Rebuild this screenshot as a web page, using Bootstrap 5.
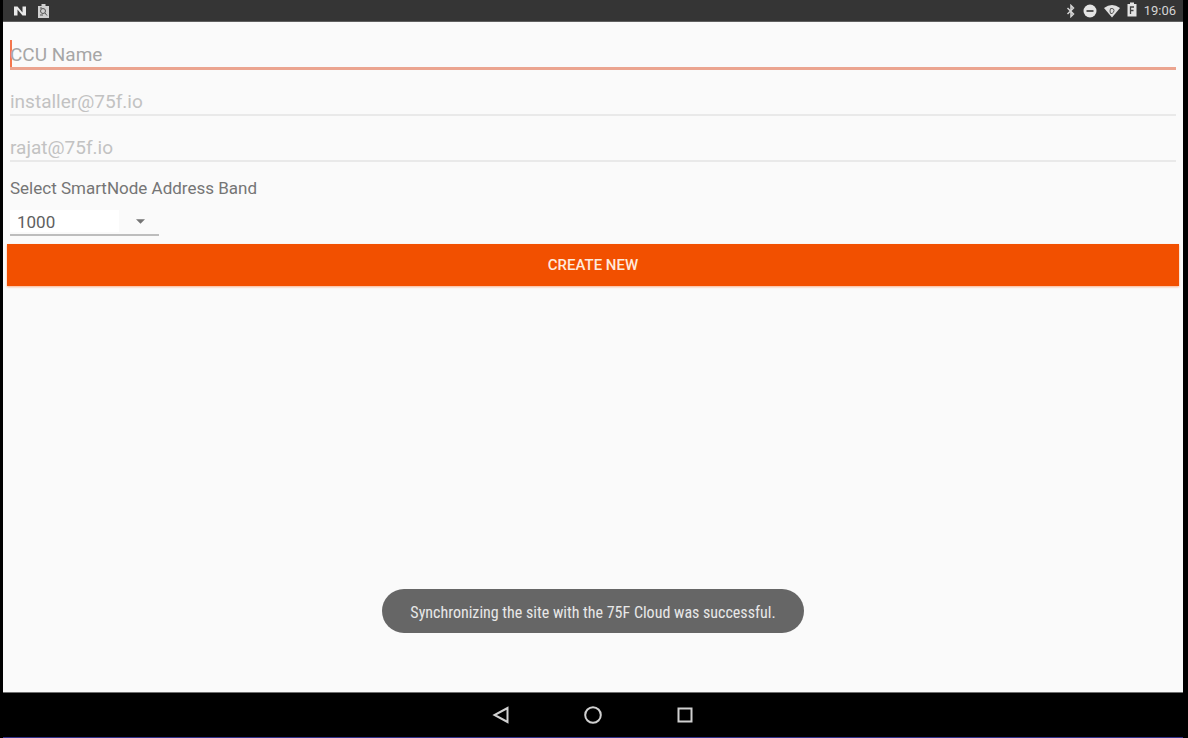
<!DOCTYPE html>
<html lang="en">
<head>
<meta charset="utf-8">
<meta name="viewport" content="width=device-width, initial-scale=1">
<title>CCU Setup</title>
<link href="https://cdn.jsdelivr.net/npm/bootstrap@5.3.0/dist/css/bootstrap.min.css" rel="stylesheet">
<style>
body { font-family: Roboto, "Liberation Sans", sans-serif; background: #fafafa; border: solid #000; border-width: 0 5px 0 3px; }
.status-bar { height: 22px; background: #353535; color: #d4d4d4; font-size: 13px; line-height: 20px; border-bottom: 1px solid #606060; padding: 0 7px 0 10px; }
.status-icons { gap: 7px; }
.form-area { padding: 8px 4px 0; }
.line-field { height: 40px; margin-bottom: 6px; padding: 12px 0 0; border: 0; border-bottom: 2px solid #e9e9e9; border-radius: 0; background: transparent; font-size: 19px; line-height: 24px; color: #c2c2c2; }
.line-field::placeholder { color: #a6a6a6; opacity: 1; }
.line-field:disabled { background: transparent; color: #c2c2c2; opacity: 1; }
.line-field.active-field { border-bottom: 3px solid #eba48f; background: linear-gradient(#f4764d, #f4764d) 0 10px / 2px 27px no-repeat; }
.fields { padding: 0 3px; }
.band-label { font-size: 17px; line-height: 20px; color: #757575; margin-top: 16px; }
.band-wrap { width: 149px; height: 26px; margin: 12px 0 8px; border-bottom: 2px solid #bdbdbd; }
.band-select { height: 22px; padding: 2px 7px 0; border: 0; border-radius: 0; font-size: 17px; line-height: 20px; color: #606060; background: url("data:image/svg+xml,%3Csvg xmlns='http://www.w3.org/2000/svg' viewBox='0 0 10 5'%3E%3Cpath d='M0 0h10L5 5z' fill='%23757575'/%3E%3C/svg%3E") 126px 9px / 9px 5px no-repeat, linear-gradient(#fff, #fff) 0 0 / 109px 22px no-repeat; }
.create-btn { height: 42px; padding: 0; border: 0; border-radius: 0; background: #f25000; color: #ffe9dc; font-size: 15px; font-weight: 500; box-shadow: 0 1px 2px #f9b28c; }
.create-btn:hover { background: #e04a00; color: #fff; }
.message { height: 44px; padding: 4px 28px 0; margin-bottom: 59px; border-radius: 22px; background: #666; color: #e8e8e8; font-family: "Roboto Condensed", Roboto, sans-serif; font-size: 16px; }
.nav-bar { height: 46px; background: #000; border-top: 1px solid #707070; border-bottom: 1px solid #33338c; gap: 74px; }
.nav-bar button { width: 18px; height: 18px; }
svg { display: block; }
</style>
</head>
<body class="d-flex flex-column min-vh-100">
<header class="status-bar d-flex justify-content-between">
  <div class="d-flex align-items-center">
    <svg width="14" height="12" viewBox="0 0 14 12" aria-label="N"><path d="M1 10.500V1.500h3.500l5 6V1.500H13v9H9.500l-5-6v6z" fill="#e8e8e8"/></svg>
    <svg class="ms-1" width="24" height="16" viewBox="0 0 24 16"><path d="M7 3h3.500V1h4v2H18v12H7z" fill="#d0d0d0"/><circle cx="12" cy="8" r="2.500" fill="none" stroke="#555"/><path d="m14 10 2 2.500M9 5h2M9 12h3" stroke="#555"/></svg>
  </div>
  <div class="status-icons d-flex align-items-center">
    <svg width="10" height="14" viewBox="0 0 10 14"><path d="m1.500 4 6 6L5 12.500v-11L7.500 4l-6 6" fill="none" stroke="#d6d6d6" stroke-width="1.500"/></svg>
    <svg width="14" height="14" viewBox="0 0 14 14"><circle cx="7" cy="7" r="6.500" fill="#e4e4e4"/><path d="M3.500 7h7" stroke="#555" stroke-width="2"/></svg>
    <svg width="16" height="14" viewBox="0 0 16 14"><path d="M0 4Q8-2 16 4L8 13.500z" fill="#e0e0e0"/><path d="M8 4.500q2 0 2 2T8 9.500 6 7t2-2.500" fill="none" stroke="#555"/></svg>
    <svg width="10" height="18" viewBox="0 0 10 18"><path d="M.5 2H3V.5h4V2h2.500v12.500h-9z" fill="#e4e4e4"/><path d="M3.500 12V5H7M3.500 8.500h3" fill="none" stroke="#444" stroke-width="1.300"/></svg>
    <time>19:06</time>
  </div>
</header>
<main class="form-area d-flex flex-column flex-grow-1">
  <form>
    <div class="fields">
      <input class="form-control line-field active-field" type="text" placeholder="CCU Name" aria-label="CCU Name">
      <input class="form-control line-field" type="email" value="installer@75f.io" aria-label="Installer email" disabled>
      <input class="form-control line-field" type="email" value="rajat@75f.io" aria-label="Manager email" disabled>
      <label class="band-label d-block" for="band">Select SmartNode Address Band</label>
      <div class="band-wrap"><select class="form-select band-select" id="band"><option>1000</option></select></div>
    </div>
    <button class="btn create-btn w-100 d-block" type="button">CREATE NEW</button>
  </form>
  <div class="message d-flex align-items-center mt-auto mx-auto" role="status">Synchronizing the site with the 75F Cloud was successful.</div>
</main>
<nav class="nav-bar d-flex justify-content-center align-items-center" aria-label="System navigation">
  <button class="btn p-0 border-0" type="button" aria-label="Back"><svg width="18" height="18" viewBox="0 0 18 18"><path d="M15.500 2v14L2.500 9z" fill="none" stroke="#d0d0d0" stroke-width="2"/></svg></button>
  <button class="btn p-0 border-0" type="button" aria-label="Home"><svg width="18" height="18" viewBox="0 0 18 18"><circle cx="9" cy="9" r="7.800" fill="none" stroke="#d0d0d0" stroke-width="2"/></svg></button>
  <button class="btn p-0 border-0" type="button" aria-label="Recent apps"><svg width="18" height="18" viewBox="0 0 18 18"><path d="M2.500 2.500h13v13h-13z" fill="none" stroke="#d0d0d0" stroke-width="2"/></svg></button>
</nav>
<script src="https://cdn.jsdelivr.net/npm/bootstrap@5.3.0/dist/js/bootstrap.bundle.min.js"></script>
</body>
</html>
